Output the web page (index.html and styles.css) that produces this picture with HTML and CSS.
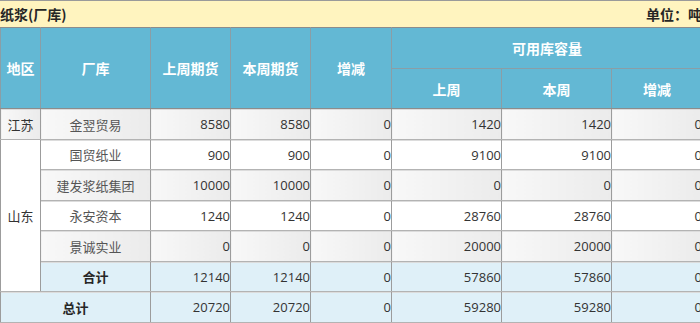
FILE: index.html
```html
<!DOCTYPE html>
<html lang="zh-CN">
<head>
<meta charset="utf-8">
<title>纸浆(厂库)</title>
<link rel="stylesheet" href="styles.css">
</head>
<body>
<div class="viewport">
  <div class="sheet">
    <div class="titlebar">
      <span class="title">纸浆(厂库)</span>
      <span class="unit">单位：吨</span>
    </div>
    <table class="grid">
      <colgroup>
        <col class="c40"><col class="c110"><col class="c80"><col class="c80"><col class="c81"><col class="c110"><col class="c110"><col class="c91">
      </colgroup>
      <thead>
        <tr class="h1">
          <th rowspan="2">地区</th>
          <th rowspan="2">厂库</th>
          <th rowspan="2">上周期货</th>
          <th rowspan="2">本周期货</th>
          <th rowspan="2">增减</th>
          <th colspan="3">可用库容量</th>
        </tr>
        <tr class="h2">
          <th>上周</th>
          <th>本周</th>
          <th>增减</th>
        </tr>
      </thead>
      <tbody>
        <tr class="r31 gray">
          <td class="region">江苏</td>
          <td class="name">金翌贸易</td>
          <td class="num">8580</td><td class="num">8580</td><td class="num">0</td>
          <td class="num">1420</td><td class="num">1420</td><td class="num">0</td>
        </tr>
        <tr class="r30 white">
          <td class="region plain" rowspan="5">山东</td>
          <td class="name">国贸纸业</td>
          <td class="num">900</td><td class="num">900</td><td class="num">0</td>
          <td class="num">9100</td><td class="num">9100</td><td class="num">0</td>
        </tr>
        <tr class="r31 gray">
          <td class="name">建发浆纸集团</td>
          <td class="num">10000</td><td class="num">10000</td><td class="num">0</td>
          <td class="num">0</td><td class="num">0</td><td class="num">0</td>
        </tr>
        <tr class="r30 white">
          <td class="name">永安资本</td>
          <td class="num">1240</td><td class="num">1240</td><td class="num">0</td>
          <td class="num">28760</td><td class="num">28760</td><td class="num">0</td>
        </tr>
        <tr class="r31 gray">
          <td class="name">景诚实业</td>
          <td class="num">0</td><td class="num">0</td><td class="num">0</td>
          <td class="num">20000</td><td class="num">20000</td><td class="num">0</td>
        </tr>
        <tr class="r30 sum">
          <td class="label">合计</td>
          <td class="num">12140</td><td class="num">12140</td><td class="num">0</td>
          <td class="num">57860</td><td class="num">57860</td><td class="num">0</td>
        </tr>
        <tr class="r31 sum">
          <td class="label" colspan="2">总计</td>
          <td class="num">20720</td><td class="num">20720</td><td class="num">0</td>
          <td class="num">59280</td><td class="num">59280</td><td class="num">0</td>
        </tr>
      </tbody>
    </table>
  </div>
</div>
</body>
</html>
```
FILE: styles.css
```css
html, body {
  margin: 0;
  padding: 0;
  background: #ffffff;
  overflow: hidden;
}
.viewport {
  width: 700px;
  height: 323px;
  overflow: hidden;
}
.sheet {
  width: 702px;
  font-family: "Open Sans", "Noto Sans CJK SC", sans-serif;
  font-size: 12px;
  color: #333333;
}
.titlebar {
  box-sizing: border-box;
  height: 27px;
  border-top: 1px solid #9a9a9a;
  background: #fff4bf;
  display: flex;
  align-items: center;
  justify-content: space-between;
  font-family: "Noto Sans CJK SC", sans-serif;
  font-weight: bold;
  font-size: 14px;
  color: #262626;
}
.grid {
  border-collapse: collapse;
  table-layout: fixed;
  width: 702px;
}
.c40 { width: 40px; }
.c110 { width: 110px; }
.c80 { width: 80px; }
.c81 { width: 81px; }
.c91 { width: 91px; }
.grid th {
  background: #63b8d4;
  color: #ffffff;
  font-family: "Noto Sans CJK SC", sans-serif;
  font-weight: bold;
  font-size: 14px;
  border: 1px solid #8a9ea6;
  padding: 0;
  text-align: center;
}
.grid thead tr:first-child th {
  border-top-color: #8c8c8c;
}
.h1 { height: 41px; }
.h2 { height: 40px; }
.grid thead tr.h2 th,
.grid thead tr.h1 th[rowspan] {
  border-bottom: 1px solid #8c8c8c;
}
.grid td {
  border-left: 1px solid #9c9c9c;
  border-right: 1px solid #9c9c9c;
  border-top: 1px solid #b3b3b3;
  border-bottom: 1px solid #b3b3b3;
  padding: 0;
  box-shadow: inset 0 1px 0 #dcdcdc;
  white-space: nowrap;
}
.r31 { height: 31px; }
.r30 { height: 30px; }
.gray td {
  background: linear-gradient(to right, #f8f8f8, #ebebeb);
}
.white td {
  background: #ffffff;
}
.grid td.plain {
  background: #ffffff;
  box-shadow: none;
}
.sum td {
  background: #dff0f8;
}
.region {
  text-align: center;
  font-family: "Noto Sans CJK SC", sans-serif;
  font-size: 13px;
  color: #333333;
}
.name {
  text-align: center;
  font-family: "Noto Sans CJK SC", sans-serif;
  font-size: 13px;
  color: #555555;
}
.label {
  text-align: center;
  font-family: "Noto Sans CJK SC", sans-serif;
  font-size: 13px;
  font-weight: bold;
  color: #262626;
}
.num {
  text-align: right;
  font-size: 13px;
  color: #333333;
}
```
